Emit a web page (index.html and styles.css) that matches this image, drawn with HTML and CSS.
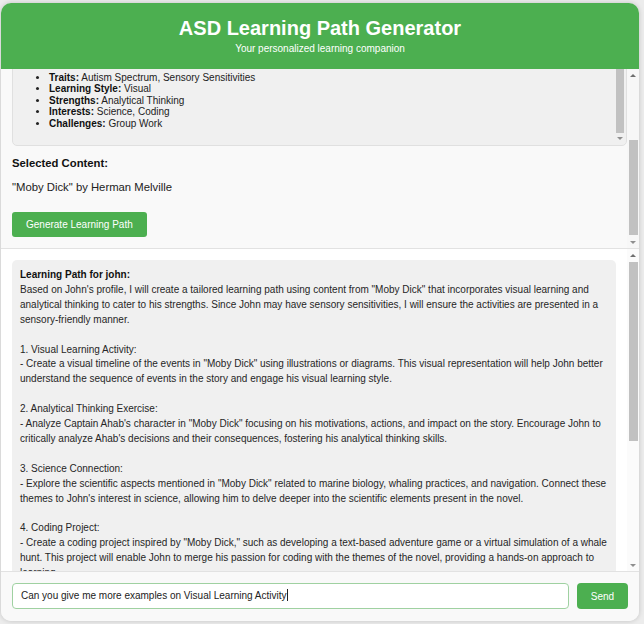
FILE: index.html
```html
<!DOCTYPE html>
<html lang="en">
<head>
<meta charset="utf-8">
<title>ASD Learning Path Generator</title>
<link rel="stylesheet" href="styles.css">
</head>
<body>
<div class="app">
  <header class="header">
    <h1 class="title">ASD Learning Path Generator</h1>
    <p class="subtitle">Your personalized learning companion</p>
  </header>

  <div class="pane setup-pane">
    <section class="scroller setup" id="setup">
      <h3 class="section-title">Select User:</h3>
      <div class="select-row"><span class="fake-select">john</span></div>
      <h3 class="section-title">User Profile:</h3>
      <div class="profile">
        <div class="scroller profile-scroll" id="profile">
          <ul class="profile-list">
            <li><b>Name:</b> John</li>
            <li><b>Age:</b> 12</li>
            <li><b>Gender:</b> Male</li>
            <li><b>Traits:</b> Autism Spectrum, Sensory Sensitivities</li>
            <li><b>Learning Style:</b> Visual</li>
            <li><b>Strengths:</b> Analytical Thinking</li>
            <li><b>Interests:</b> Science, Coding</li>
            <li><b>Challenges:</b> Group Work</li>
          </ul>
        </div>
        <div class="sbar sbar-profile">
          <span class="sb-btn up"></span>
          <div class="sb-track"><div class="sb-thumb"></div></div>
          <span class="sb-btn down"></span>
        </div>
      </div>
      <h3 class="section-title selected">Selected Content:</h3>
      <p class="content-name">"Moby Dick" by Herman Melville</p>
      <button class="btn generate">Generate Learning Path</button>
    </section>
    <div class="sbar sbar-setup">
      <span class="sb-btn up"></span>
      <div class="sb-track"><div class="sb-thumb"></div></div>
      <span class="sb-btn down"></span>
    </div>
  </div>

  <div class="pane chat-pane">
    <section class="scroller chat" id="chat">
      <div class="message"><b>Learning Path for john:</b>
Based on John's profile, I will create a tailored learning path using content from "Moby Dick" that incorporates visual learning and analytical thinking to cater to his strengths. Since John may have sensory sensitivities, I will ensure the activities are presented in a sensory-friendly manner.

1. Visual Learning Activity:
- Create a visual timeline of the events in "Moby Dick" using illustrations or diagrams. This visual representation will help John better understand the sequence of events in the story and engage his visual learning style.

2. Analytical Thinking Exercise:
- Analyze Captain Ahab's character in "Moby Dick" focusing on his motivations, actions, and impact on the story. Encourage John to critically analyze Ahab's decisions and their consequences, fostering his analytical thinking skills.

3. Science Connection:
- Explore the scientific aspects mentioned in "Moby Dick" related to marine biology, whaling practices, and navigation. Connect these themes to John's interest in science, allowing him to delve deeper into the scientific elements present in the novel.

4. Coding Project:
- Create a coding project inspired by "Moby Dick," such as developing a text-based adventure game or a virtual simulation of a whale hunt. This project will enable John to merge his passion for coding with the themes of the novel, providing a hands-on approach to learning.

5. Individual Reflection:
- Since John finds group work challenging, provide opportunities for individual reflection through journaling or quiet discussion with a mentor, in a calm and predictable environment.

By combining visual learning, analytical thinking, and his interests in science and coding, this learning path will help John engage deeply with "Moby Dick" while respecting his sensory needs.</div>
    </section>
    <div class="sbar sbar-chat">
      <span class="sb-btn up"></span>
      <div class="sb-track"><div class="sb-thumb"></div></div>
      <span class="sb-btn down"></span>
    </div>
  </div>

  <footer class="composer">
    <div class="input-box">Can you give me more examples on Visual Learning Activity<span class="caret"></span></div>
    <button class="btn send">Send</button>
  </footer>
</div>
<script src="script.js"></script>
</body>
</html>
```

FILE: styles.css
```css
* { box-sizing: border-box; }

html, body {
  margin: 0;
  padding: 0;
  background: #ececec;
  font-family: "Liberation Sans", Arial, sans-serif;
  color: #222;
}

body {
  padding: 3px 5px 3px 1px;
}

.app {
  height: 618px;
  background: #f9f9f9;
  border-radius: 10px;
  box-shadow: 0 0 5px rgba(0, 0, 0, 0.18);
  overflow: hidden;
  display: flex;
  flex-direction: column;
}

.header {
  flex: 0 0 66px;
  background: #4caf50;
  color: #fff;
  text-align: center;
  padding: 12px 0 0;
}

.title {
  margin: 0;
  font-size: 20px;
  line-height: 26px;
  font-weight: bold;
}

.subtitle {
  margin: 1px 0 0;
  font-size: 10px;
  line-height: 14px;
}

/* panes with fake scrollbars */
.pane {
  display: flex;
  min-height: 0;
}

.scroller {
  flex: 1 1 auto;
  min-width: 0;
  overflow: hidden;
}

.sbar {
  flex: 0 0 12px;
  display: flex;
  flex-direction: column;
  align-items: center;
}

.sb-btn {
  flex: 0 0 12px;
  width: 100%;
  display: flex;
  align-items: center;
  justify-content: center;
}

.sb-btn::before {
  content: "";
  width: 0;
  height: 0;
  border-left: 3px solid transparent;
  border-right: 3px solid transparent;
}

.sb-btn.up::before { border-bottom: 3px solid #6f6f6f; }
.sb-btn.down::before { border-top: 3px solid #8f8f8f; }

.sb-track {
  flex: 1 1 auto;
  width: 100%;
  display: flex;
  flex-direction: column;
  align-items: center;
}

.sb-thumb {
  width: 9px;
  background: #c1c1c1;
}

/* setup pane */
.setup-pane {
  flex: 0 0 180px;
  background: #f9f9f9;
  border-bottom: 1px solid #e2e2e2;
}

.setup {
  padding: 11px 0 11px 11px;
}

.sbar-setup { background: #f7f7f7; }
.sbar-setup .sb-thumb { margin-top: 59px; height: 95px; margin-left: 1px; }

.section-title {
  margin: 0 0 8px;
  font-size: 11.3px;
  line-height: 16px;
  font-weight: bold;
  color: #111;
}

.select-row {
  margin-bottom: 12px;
}

.fake-select {
  display: inline-block;
  width: 160px;
  padding: 4px 8px;
  font-size: 11px;
  background: #fff;
  border: 1px solid #ccc;
  border-radius: 3px;
}

.profile {
  height: 120px;
  display: flex;
  background: #f0f0f0;
  border: 1px solid #e0e0e0;
  border-radius: 5px;
}

.profile-scroll {
  padding-left: 8px;
}

.profile-list {
  margin: 11px 0 16px;
  padding-left: 28px;
  font-size: 10px;
  line-height: 11.5px;
  color: #222;
}

.profile-list b { color: #111; }

.sbar-profile {
  flex: 0 0 10px;
  margin-right: 1px;
  padding-bottom: 1px;
}
.sbar-profile .sb-btn { flex-basis: 11px; }
.sbar-profile .sb-track { justify-content: flex-end; }
.sbar-profile .sb-thumb { width: 8px; height: 70px; }

.selected {
  margin-top: 9px;
  margin-bottom: 8px;
}

.content-name {
  margin: 0 0 17px;
  font-size: 11.3px;
  line-height: 16px;
  color: #222;
}

.btn {
  border: none;
  background: #4caf50;
  color: #fff;
  font-family: "Liberation Sans", Arial, sans-serif;
  font-size: 10px;
  border-radius: 3px;
  cursor: pointer;
}

.generate {
  height: 25px;
  padding: 0 14px;
  display: block;
}

/* chat pane */
.chat-pane {
  flex: 1 1 auto;
  background: #fff;
}

.chat {
  padding: 11px 11px 12px 11px;
}

.sbar-chat { background: #fbfbfb; }
.sbar-chat .sb-thumb { margin-top: 1px; height: 179px; margin-left: 1px; }

.message {
  background: #f0f0f0;
  border-radius: 5px;
  padding: 8px 8px 10px;
  font-size: 10px;
  line-height: 14.9px;
  color: #262626;
  white-space: pre-wrap;
}

.message b { color: #111; }

/* composer */
.composer {
  flex: 0 0 49px;
  background: #f9f9f9;
  border-top: 1px solid #e2e2e2;
  display: flex;
  gap: 8px;
  padding: 11px 11px 12px 11px;
}

.input-box {
  flex: 1 1 auto;
  height: 26px;
  background: #fff;
  border: 1px solid #9fd1a1;
  border-radius: 4px;
  padding: 0 8px;
  font-size: 10px;
  line-height: 24px;
  color: #222;
  white-space: nowrap;
  overflow: hidden;
}

.caret {
  display: inline-block;
  width: 1px;
  height: 12px;
  background: #222;
  vertical-align: -2px;
}

.send {
  flex: 0 0 51px;
  height: 26px;
  border-radius: 4px;
}
```

FILE: script.js
```js
document.querySelectorAll('#setup, #profile').forEach(function (el) {
  el.scrollTop = el.scrollHeight;
});
```
